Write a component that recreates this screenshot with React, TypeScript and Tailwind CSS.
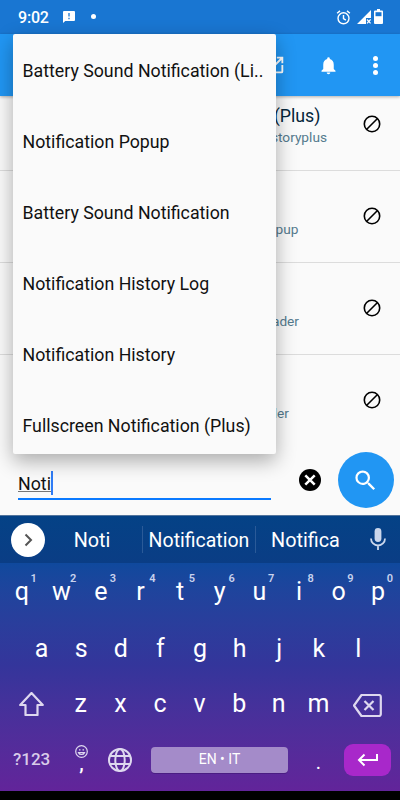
import type { ReactNode } from "react";

const suggestions = [
  "Battery Sound Notification (Li..",
  "Notification Popup",
  "Battery Sound Notification",
  "Notification History Log",
  "Notification History",
  "Fullscreen Notification (Plus)",
];

const apps = [
  { title: "(Plus)", pkg: "storyplus", width: "w-[327px]" },
  { title: "", pkg: "pup", width: "w-[298.5px]" },
  { title: "", pkg: "ader", width: "w-[299px]" },
  { title: "", pkg: "ller", width: "w-[289px]" },
];

const topRow = ["q", "w", "e", "r", "t", "y", "u", "i", "o", "p"];
const middleRow = ["a", "s", "d", "f", "g", "h", "j", "k", "l"];
const bottomRow = ["z", "x", "c", "v", "b", "n", "m"];

function StatusBar() {
  return (
    <div className="h-[34px] shrink-0 bg-[#1976d2] flex items-center pl-[18px] pr-[17px] text-white">
      <span className="text-[16px] leading-none font-medium w-[45px] tracking-[-0.2px] pt-px">9:02</span>
      <svg className="w-[12px] h-[12px] mt-[-1px]" viewBox="0 0 12 12">
        <path d="M1 0h10a1 1 0 0 1 1 1v8a1 1 0 0 1-1 1H2.3L0 12V1a1 1 0 0 1 1-1z" fill="#fff" />
        <path d="M6 2v3.6M6 6.8v1.5" stroke="#1976d2" strokeWidth="1.3" />
      </svg>
      <span className="w-[5px] h-[5px] rounded-full bg-white ml-[15.5px] mt-[-1px]" />
      <svg className="w-[15px] h-[15px] ml-auto" viewBox="0 0 14 15" fill="none" stroke="#fff" strokeWidth="1.4">
        <circle cx="7" cy="8.3" r="5.5" />
        <path d="M7 5v3.6l2.4 1.6M.6 3.3L3.5.9M13.4 3.3L10.5.9" />
      </svg>
      <svg className="w-[14px] h-[14px] ml-[6px]" viewBox="0 0 14 14">
        <path d="M14 0v8H9v6H0z" fill="#fff" />
        <path d="M10 9.5l3.6 3.9M13.6 9.5L10 13.4" stroke="#fff" strokeWidth="1.2" />
      </svg>
      <svg className="w-[9px] h-[15px] ml-[3px] mt-[-1px]" viewBox="0 0 9 15">
        <path d="M3 0h3v1.5h2a1 1 0 0 1 1 1V14a1 1 0 0 1-1 1H1a1 1 0 0 1-1-1V2.5a1 1 0 0 1 1-1h2z" fill="#fff" />
        <path d="M1.5 3.2h6v4h-6z" fill="#1976d2" />
      </svg>
    </div>
  );
}

function Toolbar() {
  return (
    <div className="h-[62px] shrink-0 bg-[#2196f3] flex items-center justify-end pr-[22px] shadow-[0_1px_3px_rgba(0,0,0,0.3)] z-10">
      <svg className="w-[22px] h-[22px] mr-[32px]" viewBox="0 0 24 24" fill="#fff">
        <path d="M19 19H5V5h7V3H5a2 2 0 0 0-2 2v14a2 2 0 0 0 2 2h14a2 2 0 0 0 2-2v-7h-2zM14 3v2h3.59l-9.83 9.83 1.41 1.41L19 6.41V10h2V3z" />
      </svg>
      <svg className="w-[21px] h-[21px] mr-[34px] mt-px" viewBox="0 0 24 24" fill="#fff">
        <path d="M12 22c1.1 0 2-.9 2-2h-4c0 1.1.9 2 2 2zm6-6v-5c0-3.07-1.64-5.64-4.5-6.32V4a1.5 1.5 0 0 0-3 0v.68C7.63 5.36 6 7.92 6 11v5l-2 2v1h16v-1z" />
      </svg>
      <div className="flex flex-col gap-[2px]">
        <span className="w-[5px] h-[5px] rounded-full bg-white" />
        <span className="w-[5px] h-[5px] rounded-full bg-white" />
        <span className="w-[5px] h-[5px] rounded-full bg-white" />
      </div>
    </div>
  );
}

function AppList() {
  return (
    <div className="h-[350px] shrink-0 overflow-hidden flex flex-col">
      {apps.map((app, i) => (
        <div
          key={app.pkg}
          className={`${i === 0 ? "h-[75px]" : "h-[92px]"} shrink-0 border-b ${i === 3 ? "border-transparent" : "border-[#dcdcdc]"} flex flex-col justify-end relative`}
        >
          <div className={`${app.width} text-right`}>
            <div className="h-[22px] pr-[6.5px] text-[17.8px] leading-[22px] text-[#06263b]">{app.title}</div>
            <div className="h-[20px] text-[13.7px] leading-[20px] text-[#557b8e]">{app.pkg}</div>
          </div>
          <div className="h-[23px]" />
          <svg className="absolute right-[19px] bottom-[37px] w-[18px] h-[18px]" viewBox="0 0 18 18" fill="none" stroke="#000" strokeWidth="1.6">
            <circle cx="9" cy="9" r="7.7" />
            <path d="M3.5 14.5l11-11" />
          </svg>
        </div>
      ))}
    </div>
  );
}

function SearchRow() {
  return (
    <div className="h-[69px] shrink-0 flex items-start pl-[18px] pr-[6.5px]">
      <div className="w-[253px] h-[54px] border-b-2 border-[#0a7aff] flex items-end pb-[3px]">
        <span className="text-[17.8px] leading-[14px] text-[#111] border-b border-[#777] mb-[3px]">Noti</span>
        <span className="w-[2px] h-[24px] bg-[#2f7cf6]" />
      </div>
      <svg className="w-[22px] h-[22px] ml-[28px] mt-[23px]" viewBox="0 0 22 22">
        <circle cx="11" cy="11" r="11" fill="#000" />
        <path d="M6.3 6.3l9.4 9.4M15.7 6.3l-9.4 9.4" stroke="#fff" strokeWidth="2.5" />
      </svg>
      <button className="w-[56px] h-[56px] rounded-full bg-[#2196f3] ml-auto mt-[6px] flex items-center justify-center">
        <svg className="w-[27px] h-[27px]" viewBox="0 0 24 24" fill="#fff">
          <path d="M15.5 14h-.79l-.28-.27A6.47 6.47 0 0 0 16 9.5 6.5 6.5 0 1 0 9.5 16c1.61 0 3.09-.59 4.23-1.57l.27.28v.79l5 4.99L20.49 19zm-6 0C7.01 14 5 11.99 5 9.5S7.01 5 9.5 5 14 7.01 14 9.5 11.99 14 9.5 14z" />
        </svg>
      </button>
    </div>
  );
}

function Key({ children, hint }: { children: ReactNode; hint?: string }) {
  return (
    <div className="relative w-[39.6px] h-full flex items-center justify-center text-[25px] leading-none text-white">
      {children}
      {hint && <span className="absolute right-[2px] top-[10px] w-[12px] text-center text-[11px] leading-none font-semibold text-[#c9d3ee]">{hint}</span>}
    </div>
  );
}

function Keyboard() {
  return (
    <div className="h-[276px] shrink-0 flex flex-col">
      <div className="h-[48px] shrink-0 border-t border-[#52749c] bg-linear-to-b from-[#044286] to-[#0a3d85] flex items-center text-white text-[19.8px]">
        <div className="w-[34px] h-[34px] rounded-full bg-white ml-[11px] flex items-center justify-center">
          <svg className="w-[9px] h-[14px]" viewBox="0 0 9 14" fill="none" stroke="#555" strokeWidth="2">
            <path d="M1.5 1.5L7 7l-5.500 5.500" />
          </svg>
        </div>
        <span className="w-[97px] pr-[3px] text-center pt-[2px]">Noti</span>
        <span className="w-px h-[27px] bg-[#2a5a98]" />
        <span className="w-[112px] text-center pt-[2px] text-[19.5px]">Notification</span>
        <span className="w-px h-[27px] bg-[#2a5a98]" />
        <span className="w-[99px] text-center pt-[2px]">Notifica</span>
        <svg className="w-[16px] h-[22px] ml-[15px] mt-[-2px]" viewBox="0 0 16 22">
          <rect x="4.6" y="0" width="6.8" height="14" rx="3.4" fill="#cbd7ec" />
          <path d="M1 10.5a7 7 0 0 0 14 0M8 17.5V22" fill="none" stroke="#cbd7ec" strokeWidth="1.8" />
        </svg>
      </div>
      <div className="h-[228px] bg-linear-to-b from-[#0f499d] via-[#34359b] via-45% to-[#62249a] flex flex-col">
        <div className="h-[57px] flex pl-[2px]">
          {topRow.map((letter, i) => (
            <Key key={letter} hint={String((i + 1) % 10)}>{letter}</Key>
          ))}
        </div>
        <div className="h-[56px] flex pl-[21.8px]">
          {middleRow.map((letter) => (
            <Key key={letter}>{letter}</Key>
          ))}
        </div>
        <div className="h-[55px] flex items-center pl-[19px]">
          <svg className="w-[25px] h-[24px] mt-px mr-[17px]" viewBox="0 0 25 24" fill="none" stroke="#ded8ef" strokeWidth="2.2" strokeLinejoin="round">
            <path d="M12.5 1L1.2 13H6.5v10h12V13h5.3z" />
          </svg>
          {bottomRow.map((letter) => (
            <Key key={letter}>{letter}</Key>
          ))}
          <svg className="w-[29px] h-[23px] ml-[15px] mt-[3px]" viewBox="0 0 29 23" fill="none" stroke="#ded8ef" strokeWidth="2.2" strokeLinejoin="round">
            <path d="M8.5 1H26a1.8 1.8 0 0 1 1.8 1.8v17.4A1.8 1.8 0 0 1 26 22H8.5L1 11.5z" />
            <path d="M11.5 7l9 9M20.5 7l-9 9" />
          </svg>
        </div>
        <div className="h-[60px] flex items-center pl-[13px] pb-[3px]">
          <span className="w-[51px] text-[17px] font-medium text-[#d9ccea]">?123</span>
          <div className="w-[35px] flex flex-col items-center mt-[-6px]">
            <svg className="w-[13px] h-[13px]" viewBox="0 0 13 13" fill="none" stroke="#ded8ef" strokeWidth="1.2">
              <circle cx="6.5" cy="6.5" r="5.8" />
              <path d="M3.5 7.7c1 2.4 5 2.4 6 0zM4 4.8h1.5M7.5 4.8H9" />
            </svg>
            <span className="text-[20px] leading-[10px] font-medium text-white">,</span>
          </div>
          <svg className="w-[24px] h-[24px] ml-[9px]" viewBox="0 0 24 24" fill="none" stroke="#ded8ef" strokeWidth="2">
            <circle cx="12" cy="12" r="11" />
            <ellipse cx="12" cy="12" rx="4.7" ry="11" />
            <path d="M2 8h20M2 16h20" />
          </svg>
          <div className="w-[137px] h-[26px] rounded-[4px] bg-[#a48bc9] ml-[19px] flex items-center justify-center text-[14px] text-white shadow-[0_1px_0_#4b1d83]">EN • IT</div>
          <span className="w-[56px] pl-[5px] mt-[4px] text-center text-[20px] text-white">.</span>
          <div className="w-[47px] h-[32px] rounded-[9px] bg-[#a828ca] flex items-center justify-center">
            <svg className="w-[21px] h-[14px]" viewBox="0 0 21 14" fill="none" stroke="#fff" strokeWidth="2">
              <path d="M20 1v6H2M7.5 1.5L2 7l5.5 5.5" />
            </svg>
          </div>
        </div>
      </div>
    </div>
  );
}

export default function App() {
  return (
    <div className="relative w-[400px] h-[800px] overflow-hidden flex flex-col bg-[#fafafa] font-['Roboto',sans-serif]">
      <StatusBar />
      <Toolbar />
      <AppList />
      <SearchRow />
      <Keyboard />
      <div className="h-[9px] bg-black" />

      {/* autocomplete popup */}
      <div className="absolute left-[13px] top-[34px] w-[262.5px] h-[420px] z-20 overflow-hidden rounded-[2px] bg-[#fafafa] pt-[1.5px] shadow-[0_7px_20px_rgba(0,0,0,0.32)]">
        {suggestions.map((name) => (
          <div key={name} className="h-[71px] pl-[9.5px] flex items-center text-[17.75px] text-[#111] whitespace-nowrap">
            {name}
          </div>
        ))}
      </div>
    </div>
  );
}
